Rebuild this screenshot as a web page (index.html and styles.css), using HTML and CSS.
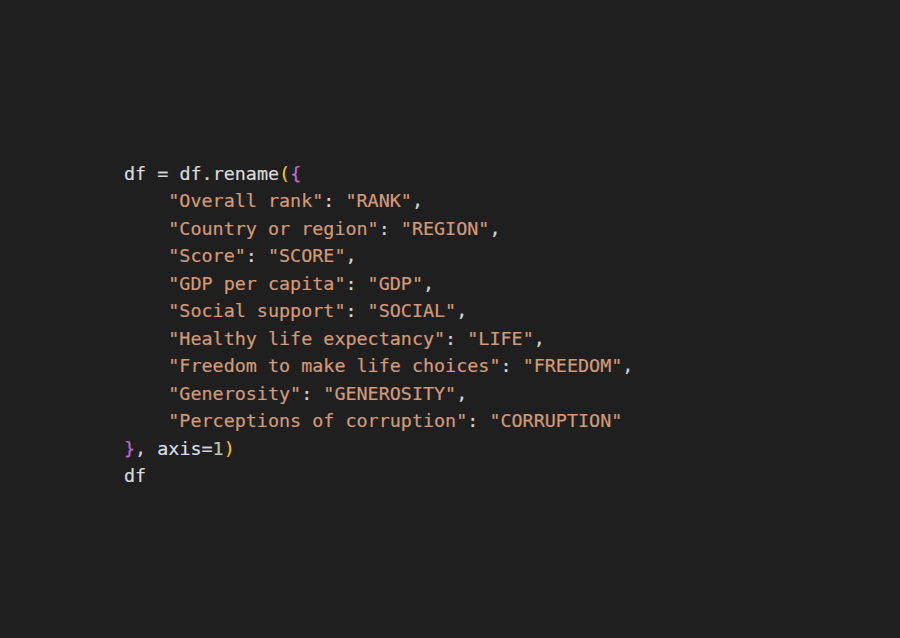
FILE: index.html
```html
<!DOCTYPE html>
<html>
<head>
<meta charset="utf-8">
<link rel="stylesheet" href="styles.css">
</head>
<body>
<main class="canvas">
<pre class="code"><span class="id">df</span> <span class="op">=</span> <span class="id">df</span><span class="op">.</span><span class="id">rename</span><span class="p1">(</span><span class="p2">{</span>
    <span class="str">"Overall rank"</span><span class="op">:</span> <span class="str">"RANK"</span><span class="op">,</span>
    <span class="str">"Country or region"</span><span class="op">:</span> <span class="str">"REGION"</span><span class="op">,</span>
    <span class="str">"Score"</span><span class="op">:</span> <span class="str">"SCORE"</span><span class="op">,</span>
    <span class="str">"GDP per capita"</span><span class="op">:</span> <span class="str">"GDP"</span><span class="op">,</span>
    <span class="str">"Social support"</span><span class="op">:</span> <span class="str">"SOCIAL"</span><span class="op">,</span>
    <span class="str">"Healthy life expectancy"</span><span class="op">:</span> <span class="str">"LIFE"</span><span class="op">,</span>
    <span class="str">"Freedom to make life choices"</span><span class="op">:</span> <span class="str">"FREEDOM"</span><span class="op">,</span>
    <span class="str">"Generosity"</span><span class="op">:</span> <span class="str">"GENEROSITY"</span><span class="op">,</span>
    <span class="str">"Perceptions of corruption"</span><span class="op">:</span> <span class="str">"CORRUPTION"</span>
<span class="p2">}</span><span class="op">,</span> <span class="arg">axis</span><span class="op">=</span><span class="num">1</span><span class="p1">)</span>
<span class="id">df</span></pre>
</main>
</body>
</html>
```
FILE: styles.css
```css
html, body {
  margin: 0;
  padding: 0;
  background: #1f1f1f;
  width: 900px;
  height: 638px;
  overflow: hidden;
}
.canvas {
  padding: 160px 0 0 124px;
}
.code {
  margin: 0;
  font-family: "DejaVu Sans Mono", "Liberation Mono", monospace;
  font-size: 18.4px;
  line-height: 27.45px;
  color: #d8d8d8;
  -webkit-text-stroke: 0.2px currentColor;
}
.id { color: #dadada; }
.op { color: #d4d4d4; }
.str { color: #d39a78; }
.p1 { color: #f2c418; }
.p2 { color: #c46ad0; }
.arg { color: #dcdfee; }
.num { color: #b5cea8; }
```
